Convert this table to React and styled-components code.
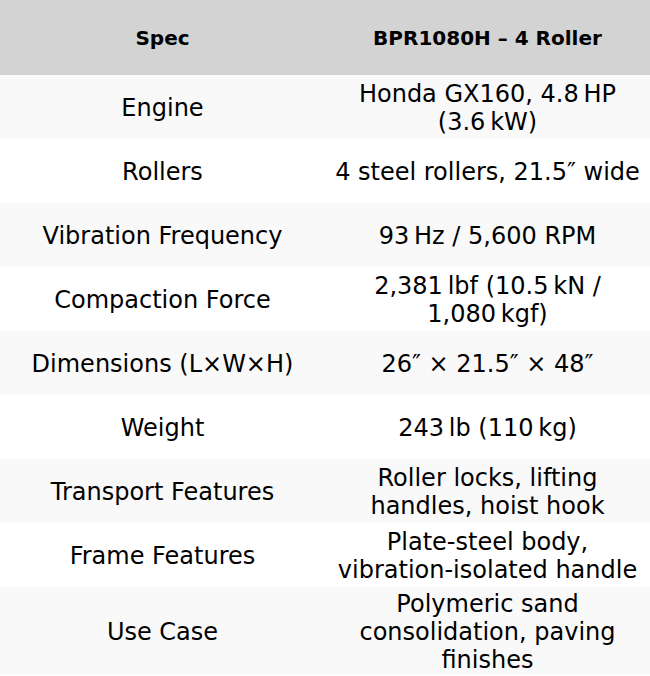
import React from 'react'
import styled, {createGlobalStyle} from 'styled-components'

const GlobalStyle = createGlobalStyle`
  body {
    margin: 0;
    background: #fff;
    font-family: "DejaVu Sans", sans-serif;
    color: #000;
  }
`

const Table = styled.table`
  width: 650px;
  border-collapse: collapse;
  table-layout: fixed;
`

const HeadCell = styled.th`
  height: 75px;
  padding: 0 4px;
  background: #d3d3d3;
  font-size: 20px;
  font-weight: bold;
  text-align: center;
  vertical-align: middle;
`

const Row = styled.tr`
  height: 64px;
  background: ${props => (props.$striped ? '#f9f9f9' : '#fff')};
`

const Cell = styled.td`
  padding: 3px 4px 1px;
  font-size: 24px;
  line-height: 28px;
  text-align: center;
  vertical-align: middle;
`

const specs = [
  ['Engine', 'Honda GX160, 4.8\u202FHP (3.6\u202FkW)'],
  ['Rollers', '4 steel rollers, 21.5\u2033 wide'],
  ['Vibration Frequency', '93\u202FHz / 5,600 RPM'],
  ['Compaction Force', '2,381\u202Flbf (10.5\u202FkN / 1,080\u202Fkgf)'],
  ['Dimensions (L\u00d7W\u00d7H)', '26\u2033 \u00d7 21.5\u2033 \u00d7 48\u2033'],
  ['Weight', '243\u202Flb (110\u202Fkg)'],
  ['Transport Features', 'Roller locks, lifting handles, hoist hook'],
  ['Frame Features', 'Plate-steel body, vibration-isolated handle'],
  ['Use Case', 'Polymeric sand consolidation, paving finishes'],
]

const App = () => (
  <>
    <GlobalStyle />
    <Table>
      <thead>
        <tr>
          <HeadCell>Spec</HeadCell>
          <HeadCell>BPR1080H – 4 Roller</HeadCell>
        </tr>
      </thead>
      <tbody>
        {specs.map(([label, value], i) => (
          <Row key={label} $striped={i % 2 === 0}>
            <Cell>{label}</Cell>
            <Cell>{value}</Cell>
          </Row>
        ))}
      </tbody>
    </Table>
  </>
)

export default App
